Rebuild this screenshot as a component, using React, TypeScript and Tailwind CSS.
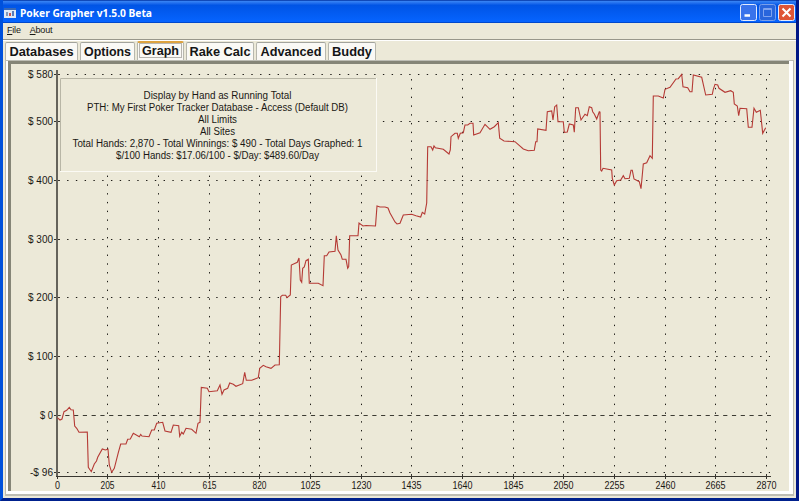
import type { ReactNode } from "react";

const TABS = [
  { label: "Databases", box: "w-[73px]", text: 64 },
  { label: "Options", box: "w-[55px]", text: 47 },
  { label: "Graph", box: "w-[47px]", text: 37 },
  { label: "Rake Calc", box: "w-[68px]", text: 61 },
  { label: "Advanced", box: "w-[70px]", text: 61 },
  { label: "Buddy", box: "w-[48px]", text: 40 },
];

const SUMMARY = [
  { text: "Display by Hand as Running Total", width: 148 },
  { text: "PTH: My First Poker Tracker Database - Access (Default DB)", width: 261 },
  { text: "All Limits", width: 39 },
  { text: "All Sites", width: 35 },
  { text: "Total Hands: 2,870 - Total Winnings: $ 490 - Total Days Graphed: 1", width: 290 },
  { text: "$/100 Hands: $17.06/100 - $/Day: $489.60/Day", width: 203 },
];

const Y_TICKS = [
  { label: "$ 580", y: 74.5, width: 25 },
  { label: "$ 500", y: 121.5, width: 25 },
  { label: "$ 400", y: 180.5, width: 25 },
  { label: "$ 300", y: 239.5, width: 25 },
  { label: "$ 200", y: 297.5, width: 25 },
  { label: "$ 100", y: 356.5, width: 25 },
  { label: "$ 0", y: 415.5, width: 13 },
  { label: "-$ 96", y: 472.5, width: 23 },
];

const X_TICKS = [0, 205, 410, 615, 820, 1025, 1230, 1435, 1640, 1845, 2050, 2255, 2460, 2665, 2870];

const xAt = (hand: number) => Math.floor(57.2 + (hand / 2870) * 709.3) + 0.5;

const LINE = [
  "57.3,417.7 60,420 62,419 64,411.7 66.7,410.3 69.3,407.3 71,409.7 73.3,410 74.7,426 76.7,428.3 79,432.3 87.3,432 88.3,467.3 91.3,471.7 94.3,464 96.5,461 97.7,457.3 102.3,449 105.3,450 108,449.3",
  "109.3,465 111.7,472.3 114.3,468.3 118.3,452.7 120.7,444 126,444 127.7,439.3 130.3,439 133.3,433.3 139.3,436.7 140.7,434.5 142,436 149,436.7 151.7,430 154.3,430 156.7,423.3 162.7,422.3 165,431 171,432.3 173.3,425 178.7,425.7 179.7,436.3 181.7,432.3 183.3,434 186,428.3 191.7,429.3 196,433.3 198,423.3 200,422.3",
  "201.3,387.5 207.3,388.3 209,391.7 217.3,390.7 220,385 222,394.3 224,390 227.7,388.3 229.7,383 233.3,384.3 236,386.3 242.7,383.7 244.7,372.3 246.3,380.3 251.7,380.3 258.3,377.7 259.7,368.3 263.3,365.3 266,366.7 271,368.3 275,365 279.3,364.7",
  "280,330 280.7,296.7 282.3,295.3 285.7,295.3 287,297.7 290.3,295 291.3,265 297.3,262.3 299,258 300.3,280 301.7,282.3 302.7,268.3 304.3,267 306,260.7 308.3,259.3 309.3,283.3 318.3,283.3 323,285.7 324.3,255.7 326.7,255.7 329,252 335,251.3 336.3,235.7 338,250 341,255 342.3,259.3 346,259.3 347.7,268.3 348.7,266.7 349.7,235.7 358,235.7",
  "359,223 363,226 366,225.5 375.5,226 377,206 380,207 385,207 388,208 390,213 395,222 397,224 400,223.3 403.3,215 411.7,214.3 416,215.7 420.7,217 422.3,212.3 424.7,214 426.7,203 427.7,146.7 431,146.7 432.7,150 434,146 435.3,147.7 443.3,149.3 449,154 450.3,150 451,136.7 455,133.3 457.3,133.3 458.3,138.3 460.3,133.3 463.3,132.7 465,125 467.7,125 470,123.3 473,123.3",
  "473.7,135 480,132.7 485,124.3 490,129.3 494.3,126.7 498.3,122.7 499.7,138.3 504,141 515,141.7 523.3,149 528.3,150.7 534.3,150.3 535.7,141.7 537,141.7 537.7,129 546,130.3 547.3,111.7 551.7,111 553,120 554.7,106.7 556.7,105 558,121.7 563.3,121.7 564.3,132.3 567.3,132 569.3,124 573.3,125 574.3,132.3 575.7,107.7 578.3,107.7 581,120 585,114.3 587.3,115.7 589.3,106.7",
  "591.7,107.7 592.7,111.7 594.3,114 596.7,119 599.3,111.7 600,112 600.7,170 601.7,171 603,168.3 611.7,170 612.3,178.3 614.3,185 616.7,180.7 620.7,180 623.3,175.7 625,178.7 629.3,178.3 631,170.3 632.3,170.3 634,179 639.3,181.7 641,188.7 642.3,175 643.3,164 646.7,162.7 650,155.7 652.3,158.3 653.3,96 658.3,96 663.3,98 665,89.3 670,87.3 676,79 678.3,78.7 681.7,74.3",
  "683,86.7 687.7,87.7 690,91.7 692,91.7 693.3,75 701.7,77.3 705.7,95 712.3,94.3 713.3,89.3 715,84.3 717.7,85 719,88.3 725,92.3 730.7,90.7 733.3,92.3 734.3,104 737.3,106 738.7,115.7 740,108.3 746.7,108.7 748.3,127.3 752,127.3 754,108.3 756.3,112.3 760.3,110.3 762.7,133.3 765.7,127.7",
].join(" ");

const GraphText = (props: { x: number; y: number; width: number; anchor?: "start" | "middle" | "end"; children: ReactNode }) => {
  const { x, y, width, anchor, children } = props;
  return (
    <text x={x} y={y} textLength={width} lengthAdjust="spacingAndGlyphs" textAnchor={anchor} fontSize="10" fill="#1a1814">
      {children}
    </text>
  );
};

const WindowButton = (props: { kind: "min" | "max" | "close" }) => {
  const { kind } = props;
  const fill = kind === "close" ? "#df5536" : kind === "max" ? "#2865dc" : "#3973eb";
  const stroke = kind === "max" ? "#799fea" : "#e3ebff";
  return (
    <svg className="h-[17px] w-[17px]" viewBox="0 0 17 17">
      <rect x=".5" y=".5" width="16" height="16" rx="2" fill={fill} stroke={stroke} />
      {kind === "min" && <path d="M4.500 11.500h5.500" stroke="white" strokeWidth="2.500" />}
      {kind === "max" && <path d="M4.500 4.500v8h8v-8zM4.500 5.500h8" fill="none" stroke="#7fa3ef" />}
      {kind === "close" && <path d="m4.500 4.500 8 8m0-8-8 8" stroke="white" strokeWidth="2" />}
    </svg>
  );
};

const TitleBar = () => (
  <header className="flex h-[23px] items-center border-t border-b border-t-[#1049b8] border-b-[#0048cc] bg-linear-to-b from-[#3a86f5] from-0% via-[#0054e5] via-20% to-[#0664ff] pr-[1px] pl-[1px]">
    <svg className="mt-[2px] h-[10px] w-[12px]" viewBox="0 0 12 10">
      <path fill="#dfe8f5" d="M0 0h12v10H0z" />
      <path fill="#3768b7" d="M0 0h12v2H0z" />
      <path fill="#8098bd" d="M2 4h2v4H2z" />
      <path fill="#c95451" d="M5 5h2v3H5z" />
      <path fill="#567cbd" d="M8 3h2v5H8z" />
    </svg>
    <svg className="ml-[4px] h-[21px] w-[150px]">
      <text x="0" y="16" fontSize="11" fontWeight="bold" fill="white" textLength="132" lengthAdjust="spacingAndGlyphs" fontFamily="Noto Sans, sans-serif">
        Poker Grapher v1.5.0 Beta
      </text>
    </svg>
    <div className="mt-[2px] ml-auto flex gap-[2px]">
      <WindowButton kind="min" />
      <WindowButton kind="max" />
      <WindowButton kind="close" />
    </div>
  </header>
);

const Tabs = () => (
  <nav className="flex h-[19px] items-end gap-[2px] pl-[2px]">
    {TABS.map((tab) => {
      const active = tab.label === "Graph";
      return (
        <div
          key={tab.label}
          className={`${tab.box} ${active ? "h-[19px] border-t-2 border-t-[#dda340]" : "h-[18px] border-t border-t-[#a2a39d]"} rounded-t-[2px] border-x border-[#b7b7ad] bg-[#faf9f5]`}
        >
          <svg className="block h-full w-full">
            <text x="50%" y={active ? 12 : 13} textAnchor="middle" fontSize="13.5" fontWeight="bold" textLength={tab.text} lengthAdjust="spacingAndGlyphs" fill="#151515">
              {tab.label}
            </text>
            {active && <rect x="1.500" y=".5" width="42" height="14" fill="none" stroke="#77736b" strokeDasharray="1 1" />}
          </svg>
        </div>
      );
    })}
  </nav>
);

const Graph = () => (
  <svg className="block h-[427px] w-[778px]" viewBox="11 64 778 427">
    <rect x="60.500" y="78.500" width="316" height="93" fill="#ece9d8" stroke="#fbfaf4" />
    <path d="M376 78.500H60.500V171" fill="none" stroke="#b8b6a6" />
    {Y_TICKS.map((tick) => (
      <g key={tick.label}>
        {tick.label !== "$ 0" && (
          <line x1={tick.label === "$ 500" ? 382.9 : 67.1} x2="770" y1={tick.y} y2={tick.y} stroke="#1d1b16" strokeDasharray="1.400 7.372" />
        )}
        <path d={`M54 ${tick.y}h6`} stroke="#35332e" />
        <GraphText x={53} y={tick.y + 3.5} width={tick.width} anchor="end">
          {tick.label}
        </GraphText>
      </g>
    ))}
    <path d="M56.500 415.500H771" stroke="#3c3b33" strokeDasharray="4.200 4.572" />
    {X_TICKS.map((hand) => {
      const x = xAt(hand);
      return (
        <g key={hand}>
          {hand > 0 && <line x1={x} x2={x} y1={x < 377 ? 175.6 : 79.1} y2="469" stroke="#1d1b16" strokeDasharray="1.400 7.372" />}
          <path d={`M${x} 474v5`} stroke="#35332e" />
          <GraphText x={x} y={488.5} width={String(hand).length * 5 + (hand > 0 && hand < 1000 ? -1 : 0)} anchor="middle">
            {hand}
          </GraphText>
        </g>
      );
    })}
    <path d="M57 70v407" stroke="#65635b" strokeWidth="2" />
    <path d="M56 476.500h715" stroke="#393730" />
    {SUMMARY.map((line, i) => (
      <GraphText key={line.text} x={217.5} y={99 + i * 12} width={line.width} anchor="middle">
        {line.text}
      </GraphText>
    ))}
    <polyline points={LINE} fill="none" stroke="#b53a35" strokeWidth="1.100" />
  </svg>
);

export default function App() {
  return (
    <main className="h-[501px] w-[799px] overflow-hidden border-r-[3px] border-b-[3px] border-l-[3px] border-r-[#001785] border-b-[#00218d] border-l-[#0051dc] bg-[#ece9d8] font-['Liberation_Sans',sans-serif]">
      <TitleBar />
      <div className="flex h-[16px] items-center gap-[9px] pl-[4px] text-[9px] tracking-[-0.2px] text-[#1a1814]">
        <span><u>F</u>ile</span>
        <span><u>A</u>bout</span>
      </div>
      <div className="h-[2px] border-t border-b border-t-[#99978a] border-b-white" />
      <Tabs />
      <div className="mx-[2px] h-[436px] border border-b-2 border-[#bdbdb4] bg-white pr-[4px] pb-[3px] pl-[2px]">
        <div className="h-[430px] border-t-[3px] border-l-[3px] border-[#858577] bg-[#ece9d8]">
          <Graph />
        </div>
      </div>
    </main>
  );
}
